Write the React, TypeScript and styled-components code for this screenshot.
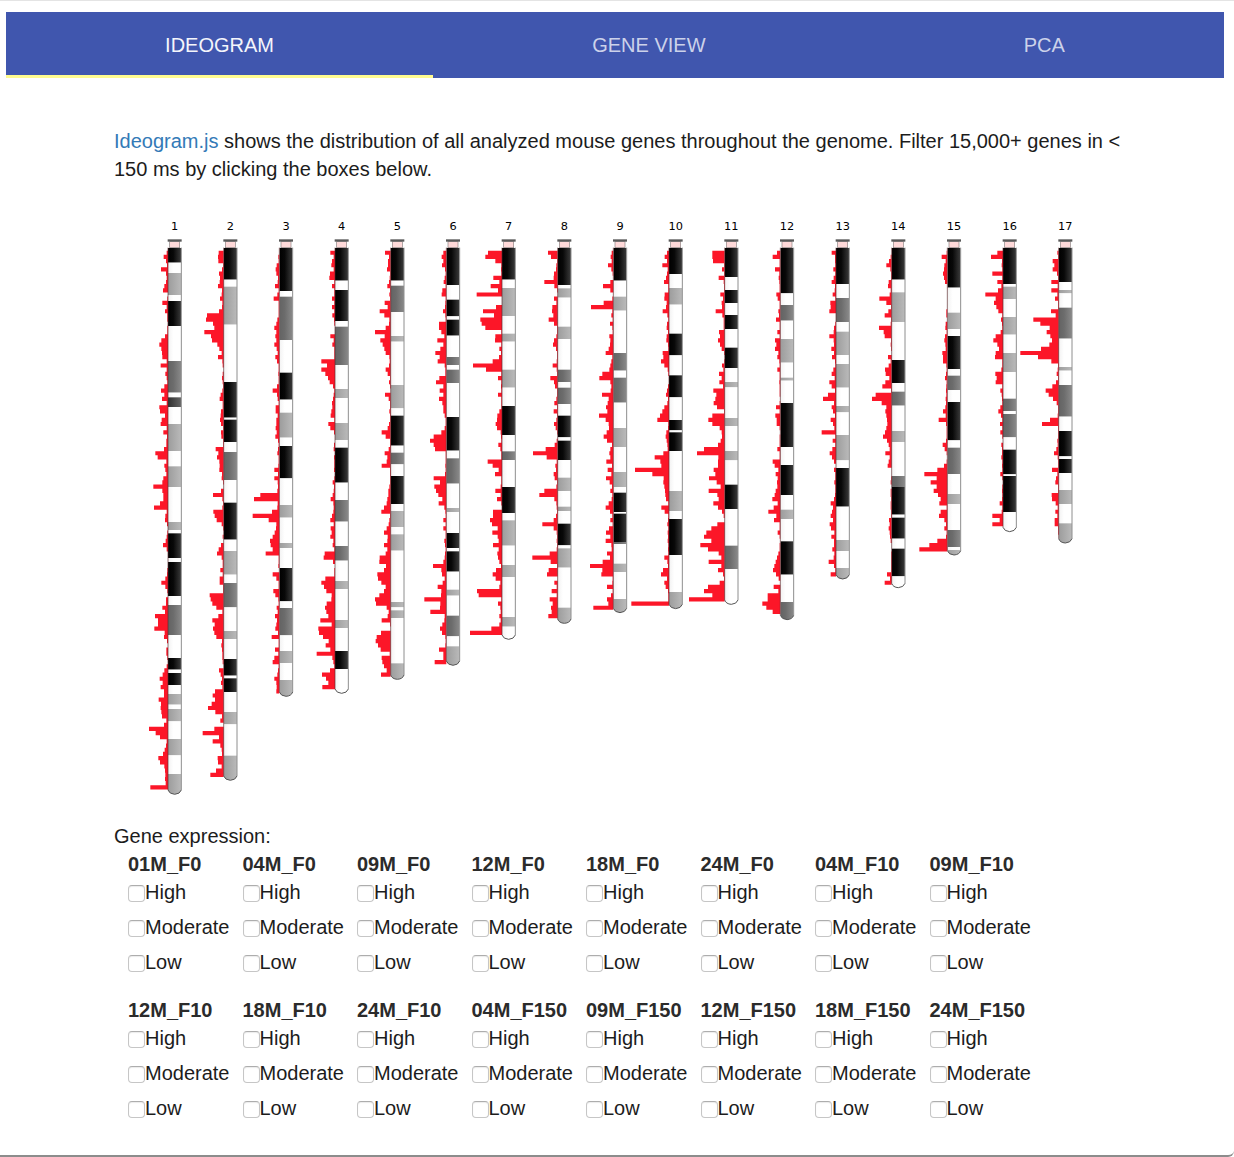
import React, { useState } from "react";
import styled, { createGlobalStyle } from "styled-components";

const GlobalStyle = createGlobalStyle`
  *, *::before, *::after { box-sizing: border-box; }
  body {
    margin: 0;
    background: #fff;
    color: #1c1c1c;
    font: 20px/28px "Liberation Sans", Arial, sans-serif;
  }
`;

const Page = styled.div`
  min-height: 100vh;
  padding: 11px 10px 0 6px;
  background: #fff;
  border-top: 1px solid #e4e4e4;
  border-bottom: 2px solid #8c8c8c;
  border-bottom-right-radius: 6px;
`;

const TabBar = styled.nav`
  display: flex;
  height: 66px;
  background: #4056ae;
`;

const Tab = styled.button<{ $active: boolean }>`
  flex: 1 1 auto;
  padding: 3px 0 0;
  border: 0;
  border-bottom: 3px solid ${(p) => (p.$active ? "#fffb90" : "transparent")};
  background: none;
  color: ${(p) => (p.$active ? "#f4f5fb" : "#ccd2ea")};
  font: inherit;
  cursor: pointer;
`;

const Main = styled.main`
  padding: 49px 90px 30px 108px;
`;

const Intro = styled.p`
  margin: 0 0 32px;
`;

const Link = styled.a`
  color: #337ab7;
  text-decoration: none;
`;

const Chart = styled.svg`
  display: block;
  width: 100%;
  height: auto;
  margin-bottom: 22px;
`;

const ChromosomeName = styled.text`
  font: 34px "DejaVu Sans", Verdana, sans-serif;
  text-anchor: middle;
  fill: #000;
`;

const FilterGrid = styled.div`
  display: grid;
  grid-template-columns: repeat(8, max-content);
  gap: 20px 13px;
  padding-left: 14px;
`;

const FilterGroup = styled.fieldset`
  min-width: 0;
  margin: 0;
  padding: 0;
  border: 0;
`;

const GroupName = styled.legend`
  padding: 0;
  font-weight: bold;
  color: #2b2b2b;
`;

const Option = styled.label`
  display: flex;
  align-items: center;
  & + & { margin-top: 7px; }
`;

const Checkbox = styled.input`
  appearance: none;
  width: 17px;
  height: 17px;
  margin: 2px 0 0;
  border: 1px solid #c6c6c6;
  border-top-color: #adadad;
  border-radius: 4px;
  background: #fff;
  box-shadow: inset 0 1px 1px #ececec;
  &:checked { background: #4056ae; }
`;

type Stain = "k" | "D" | "d" | "g" | "w";

/* Band ends from top to bottom, each followed by its stain, and gene counts per bin. */
interface Chromosome {
  bands: string;
  counts: string;
}

const CHROMOSOMES: Chromosome[] = [
  {
    bands: "143k 174w 240g 258w 333k 438w 533d 547w 576D 627w 708g 754w 816g 921w 945g 955w 1029k 1041w 1143k 1170w 1260d 1329w 1364k 1374w 1410k 1437w 1469g 1482w 1519g 1572w 1621g 1677w 1738g",
    counts: "4 13 6 3 21 6 4 6 11 15 0 2 17 4 9 2 2 0 2 2 9 20 26 20 18 17 4 22 4 8 4 2 11 21 11 18 4 26 24 9 19 22 4 14 3 5 5 12 38 31 5 11 8 5 14 17 44 17 14 14 24 42 4 8 9 3 0 2 4 7 15 4 0 0 0 0 2 3 8 20 8 2 0 6 6 17 9 39 30 30 41 10 12 3 0 5 5 2 0 4 11 16 25 16 22 12 12 28 21 22 20 18 5 12 57 37 24 4 6 10 15 29 24 11 9 8 9 7 53",
  },
  {
    bands: "194k 215w 329g 501w 608k 614w 681k 711w 795d 863w 974k 1008w 1079g 1104w 1177d 1248w 1272g 1332w 1382k 1390w 1431k 1491w 1528g 1622w 1696g",
    counts: "15 17 16 2 5 14 11 12 17 5 6 11 4 5 14 50 53 32 28 58 38 35 19 13 6 17 4 3 0 3 5 3 2 4 9 12 3 3 8 9 11 8 2 8 7 2 2 24 16 20 13 12 13 5 6 2 0 8 32 4 2 4 31 27 21 6 2 0 3 0 8 15 20 6 3 3 10 3 12 12 2 2 42 39 34 22 4 16 34 27 32 28 22 5 7 5 4 4 3 0 14 9 5 8 4 26 33 26 36 47 25 5 10 0 28 63 14 33 10 6 5 18 17 6 23 40",
  },
  {
    bands: "228k 245w 375d 473w 554k 593w 668g 693w 790k 870w 908g 984w 999g 1059w 1159k 1179w 1261d 1308w 1344g 1395w 1444g",
    counts: "0 3 2 8 11 9 4 5 13 2 6 17 2 2 2 2 6 9 15 9 12 9 15 8 5 12 7 2 2 3 2 2 7 20 7 5 2 11 11 5 9 9 11 8 12 4 2 4 6 2 2 3 15 4 15 5 4 6 57 76 5 6 22 80 32 9 10 14 20 28 26 20 41 2 2 3 0 20 9 2 2 18 12 3 2 8 5 13 7 9 12 4 23 2 2 13 3 15 20 2 4 6 15 9 8 9",
  },
  {
    bands: "197k 225w 318k 335w 450d 522w 549g 624w 675g 698w 803k 855w 920d 993w 1037d 1098w 1122g 1215w 1239g 1308w 1362k 1435w",
    counts: "14 4 9 11 4 15 17 2 9 2 2 9 2 9 2 8 3 2 0 0 14 4 8 2 2 2 41 24 41 29 21 16 6 2 4 6 9 8 11 13 2 20 14 3 0 0 3 4 0 3 2 2 3 0 2 7 3 4 7 13 5 4 5 9 14 4 13 10 14 5 7 2 31 34 6 0 2 2 29 41 33 26 10 11 25 30 26 20 44 10 50 48 36 19 28 14 55 8 5 2 15 39 27 20 38",
  },
  {
    bands: "197k 212w 291d 363w 380g 510w 580g 602w 692k 713w 748d 783w 867k 888w 936g 958w 1007g 1161w 1177g 1186w 1209g 1345w 1393g",
    counts: "17 5 8 8 11 2 3 5 10 2 4 2 18 9 33 19 4 5 15 47 18 31 24 19 15 4 3 5 15 9 2 5 2 0 17 6 2 2 4 2 2 5 9 27 15 2 2 6 18 10 12 27 2 2 2 2 4 7 7 10 12 20 28 2 4 6 12 20 9 10 20 10 15 33 34 14 20 40 38 28 15 20 34 47 44 12 6 9 27 2 0 29 42 45 38 30 3 27 25 20 12 29",
  },
  {
    bands: "210k 254w 304k 314w 362k 426w 450d 464w 504d 606w 707k 730w 806d 879w 891g 954w 999k 1009w 1070k 1124w 1142g 1202w 1264d 1294w 1351g",
    counts: "9 14 9 13 4 2 5 8 2 12 14 2 3 4 10 3 2 22 22 15 6 27 9 18 33 20 26 5 3 3 21 31 9 20 9 22 12 9 9 5 2 2 5 15 38 49 38 34 2 2 2 3 2 4 38 19 36 31 24 12 23 6 3 2 9 2 9 2 2 6 4 2 4 5 9 40 15 13 5 11 26 15 16 66 18 19 48 5 6 12 19 13 3 2 3 22 9 9 35",
  },
  {
    bands: "194k 219w 303g 356w 380g 464w 518g 573w 660k 709w 735d 816w 894k 916w 992g 1050w 1086g 1206w 1235g 1273w",
    counts: "42 50 20 2 3 2 26 8 34 12 76 0 0 18 57 24 65 61 50 2 20 21 2 8 3 9 28 87 48 2 12 2 3 2 12 2 2 2 8 14 15 19 15 4 3 2 11 5 2 2 43 28 10 21 2 2 4 20 4 15 2 0 27 27 36 30 13 29 13 10 27 10 14 12 8 3 18 28 19 5 8 75 70 2 12 5 4 8 4 8 32 96",
  },
  {
    bands: "210k 220w 248g 335w 372g 464w 501d 518w 567d 602w 667k 677w 735k 788w 828g 875w 888g 926w 991k 1000w 1058g 1178w 1225g",
    counts: "29 20 2 4 5 11 12 40 10 2 0 11 4 16 17 13 27 11 2 2 4 11 14 5 2 2 3 15 3 2 22 11 8 2 2 4 10 2 12 2 4 11 6 2 0 3 9 36 74 33 3 7 5 12 9 2 4 40 55 10 4 3 2 5 12 46 12 3 2 3 2 3 24 76 21 2 27 32 0 10 3 18 3 24 15 20 18 28",
  },
  {
    bands: "197k 245w 287g 414w 467d 488w 563d 639w 696g 771w 816g 833w 891k 896w 981k 987d 1046w 1071g 1152w 1193g",
    counts: "5 8 5 16 6 2 0 9 31 9 0 3 29 67 3 6 2 10 3 2 12 9 10 14 23 3 6 9 12 33 42 9 6 8 34 14 17 22 18 43 23 14 13 20 29 19 4 9 12 9 21 4 17 6 22 11 4 9 3 5 14 23 10 3 9 2 13 22 9 23 6 5 19 10 32 70 33 36 2 3 19 2 7 19 15 60",
  },
  {
    bands: "177k 219w 269g 356w 421k 481w 547k 615w 646k 652w 708k 828w 888g 912w 1020k 1131w 1181g",
    counts: "6 13 6 20 4 6 9 15 2 2 13 14 7 9 19 5 2 6 7 3 7 8 3 2 19 17 24 14 4 2 0 0 3 6 9 3 5 14 20 27 35 2 3 8 10 7 5 4 17 43 26 23 102 50 16 17 14 12 11 9 2 23 13 2 3 5 2 4 3 4 2 3 2 14 5 3 18 24 6 14 10 3 2 2 113",
  },
  {
    bands: "186k 225w 264k 300w 342k 398w 459k 501w 517g 609w 633g 708w 736g 809w 882k 992w 1062d 1168w",
    counts: "37 37 35 2 8 2 18 3 2 2 13 5 9 8 27 7 3 3 3 17 14 20 14 9 2 0 2 8 4 17 9 16 5 34 25 28 33 23 2 37 49 37 15 9 8 12 20 62 83 19 20 20 33 28 47 24 12 48 22 18 34 20 8 3 0 22 40 55 62 40 73 50 18 10 48 10 20 5 2 15 50 62 37 107",
  },
  {
    bands: "235k 270w 317d 372w 443g 488w 497g 564w 696k 750w 840k 884w 912g 979w 1079k 1161w 1214d",
    counts: "10 23 2 2 16 3 5 3 2 2 12 8 2 2 6 4 13 2 2 9 2 16 12 16 6 9 3 2 9 2 2 3 2 2 2 0 2 13 2 15 11 11 2 0 2 2 2 9 2 2 23 17 6 14 8 10 9 14 17 24 8 20 36 12 19 2 2 8 2 0 2 2 6 10 14 18 22 13 5 0 20 6 38 38 54 42 23",
  },
  {
    bands: "207k 249w 321d 350w 420g 447w 518g 573w 592g 660w 736g 759w 875k 975w 1008g 1059w 1092g",
    counts: "13 3 3 2 8 2 7 13 3 4 10 2 17 16 20 0 0 2 6 7 20 7 6 14 6 12 3 2 8 13 4 20 13 3 24 39 6 13 9 3 16 9 5 43 2 10 2 11 19 12 6 0 6 2 2 5 2 2 3 6 16 9 12 16 9 19 15 5 14 6 6 11 5 7 22 6 2 16",
  },
  {
    bands: "194k 232w 321g 435w 504k 530w 572d 648w 681g 783w 816d 899k 908w 971k 1001w 1084k 1118w",
    counts: "0 3 8 16 4 2 2 9 11 3 6 37 16 2 10 21 2 3 38 24 21 2 3 2 0 11 3 9 20 18 7 19 28 2 48 59 30 16 19 16 14 13 16 20 26 14 9 6 19 6 9 12 0 0 2 3 0 3 3 2 3 3 2 2 8 6 9 6 5 3 0 0 2 2 2 2 2 14 5 21",
  },
  {
    bands: "218k 293w 342g 363w 462k 482w 525d 561w 676k 698w 777d 837w 867g 945w 996d 1005w 1020g",
    counts: "2 17 5 9 10 13 10 7 0 0 0 0 0 0 3 3 0 5 6 2 7 9 6 5 15 13 13 3 2 4 7 2 3 4 3 5 4 6 13 5 26 4 2 2 2 4 14 8 2 0 2 10 30 69 32 50 32 41 28 20 24 2 20 25 9 4 9 2 4 30 54 84",
  },
  {
    bands: "207k 215w 252g 306w 359g 414w 471g 551w 588d 597w 667d 704w 778k 783w 891k 950w",
    counts: "17 36 3 4 2 32 2 17 5 15 53 22 27 20 14 2 6 3 2 7 22 29 17 12 22 24 2 2 5 23 19 22 2 8 4 3 2 8 14 6 2 9 2 8 2 0 5 3 3 5 2 3 2 8 2 0 2 3 2 3 10 2 4 32 10 32",
  },
  {
    bands: "201k 225w 235g 278w 371d 456w 467g 510w 605d 648w 724k 732w 774k 825w 867g 925w 984g",
    counts: "4 2 18 13 18 5 2 22 3 22 4 11 2 2 23 9 76 55 27 36 25 20 28 53 115 62 22 2 3 6 2 8 19 39 30 17 6 2 2 3 26 50 2 2 2 4 3 7 14 3 2 2 20 4 8 10 2 2 21 20 9 3 10 4 12 12 2 2",
  },
];

const STAINS: Record<Stain, [string, string, string]> = {
  k: ["#000000", "#080808", "#3c3c3c"],
  D: ["#303030", "#454545", "#666666"],
  d: ["#636363", "#6c6c6c", "#8a8a8a"],
  g: ["#9c9c9c", "#a8a8a8", "#bababa"],
  w: ["#f2f2f2", "#ffffff", "#ffffff"],
};

const FIRST_CENTER = 182;
const SPACING = 167;
const HALF_WIDTH = 20;
const BODY_TOP = 98;
const BIN_TOP = 107;
const BIN_HEIGHT = 12.53;

function ChromosomeFigure({ index, data }: { index: number; data: Chromosome }) {
  const center = FIRST_CENTER + SPACING * index;
  const left = center - HALF_WIDTH;
  const right = center + HALF_WIDTH;
  const bands = data.bands.split(" ").map((b) => ({
    end: parseInt(b, 10),
    stain: b.slice(-1) as Stain,
  }));
  const counts = data.counts.split(" ").map(Number);
  const end = bands[bands.length - 1].end;
  const shoulder = end - 13;
  const tip = `Q${left + 4} ${end - 1} ${center} ${end} Q${right - 4} ${end - 1} ${right} ${shoulder}`;
  const histogram =
    `M${left} ${BIN_TOP}` +
    counts.map((c, i) => `H${left - c}V${(BIN_TOP + BIN_HEIGHT * (i + 1)).toFixed(1)}`).join("") +
    `H${left}Z`;

  return (
    <g>
      <ChromosomeName x={center} y={45}>{index + 1}</ChromosomeName>
      <path d={histogram} fill="#fc1628" />
      <clipPath id={`body-${index}`}>
        <path d={`M${left} ${BODY_TOP}V${shoulder}${tip}V${BODY_TOP}Z`} />
      </clipPath>
      <g clipPath={`url(#body-${index})`}>
        {bands.map((band, i) => {
          const start = i === 0 ? BODY_TOP : bands[i - 1].end;
          return (
            <rect
              key={band.end}
              x={left}
              y={start}
              width={HALF_WIDTH * 2}
              height={band.end - start}
              fill={`url(#stain-${band.stain})`}
            />
          );
        })}
      </g>
      <path d={`M${left} ${BODY_TOP}V${shoulder}`} stroke="#5a2a2e" strokeWidth={2} />
      <path d={`M${right} ${BODY_TOP}V${shoulder}`} stroke="#8e8e8e" strokeWidth={3} />
      <path d={`M${left} ${shoulder}${tip}`} fill="none" stroke="#555" strokeWidth={3} />
      <rect x={center - 15} y={80} width={30} height={18} fill="#ffd9d9" stroke="#8a8080" strokeWidth={2} />
      <rect x={center - 21} y={73} width={42} height={7} fill="#595959" />
    </g>
  );
}

const TABS = ["IDEOGRAM", "GENE VIEW", "PCA"];

const SAMPLES = [
  "01M_F0", "04M_F0", "09M_F0", "12M_F0", "18M_F0", "24M_F0", "04M_F10", "09M_F10",
  "12M_F10", "18M_F10", "24M_F10", "04M_F150", "09M_F150", "12M_F150", "18M_F150", "24M_F150",
];

const LEVELS = ["High", "Moderate", "Low"];

export default function App() {
  const [tab, setTab] = useState(TABS[0]);

  return (
    <>
      <GlobalStyle />
      <Page>
        <TabBar>
          {TABS.map((name) => (
            <Tab key={name} type="button" $active={name === tab} onClick={() => setTab(name)}>
              {name}
            </Tab>
          ))}
        </TabBar>
        <Main>
          <Intro>
            <Link href="#ideogram">Ideogram.js</Link> shows the distribution of all analyzed mouse
            genes throughout the genome. Filter 15,000+ genes in &lt; 150 ms by clicking the boxes
            below.
          </Intro>
          <Chart id="ideogram" viewBox="0 0 3060 1755" role="img" aria-label="Mouse chromosomes 1 to 17">
            <defs>
              {Object.entries(STAINS).map(([stain, [from, mid, to]]) => (
                <linearGradient key={stain} id={`stain-${stain}`}>
                  <stop offset="0" stopColor={from} />
                  <stop offset="0.4" stopColor={mid} />
                  <stop offset="1" stopColor={to} />
                </linearGradient>
              ))}
            </defs>
            {CHROMOSOMES.map((data, i) => (
              <ChromosomeFigure key={i} index={i} data={data} />
            ))}
          </Chart>
          <div>Gene expression:</div>
          <FilterGrid>
            {SAMPLES.map((sample) => (
              <FilterGroup key={sample}>
                <GroupName>{sample}</GroupName>
                {LEVELS.map((level) => (
                  <Option key={level}>
                    <Checkbox type="checkbox" name={`${sample}-${level}`} />
                    {level}
                  </Option>
                ))}
              </FilterGroup>
            ))}
          </FilterGrid>
        </Main>
      </Page>
    </>
  );
}
